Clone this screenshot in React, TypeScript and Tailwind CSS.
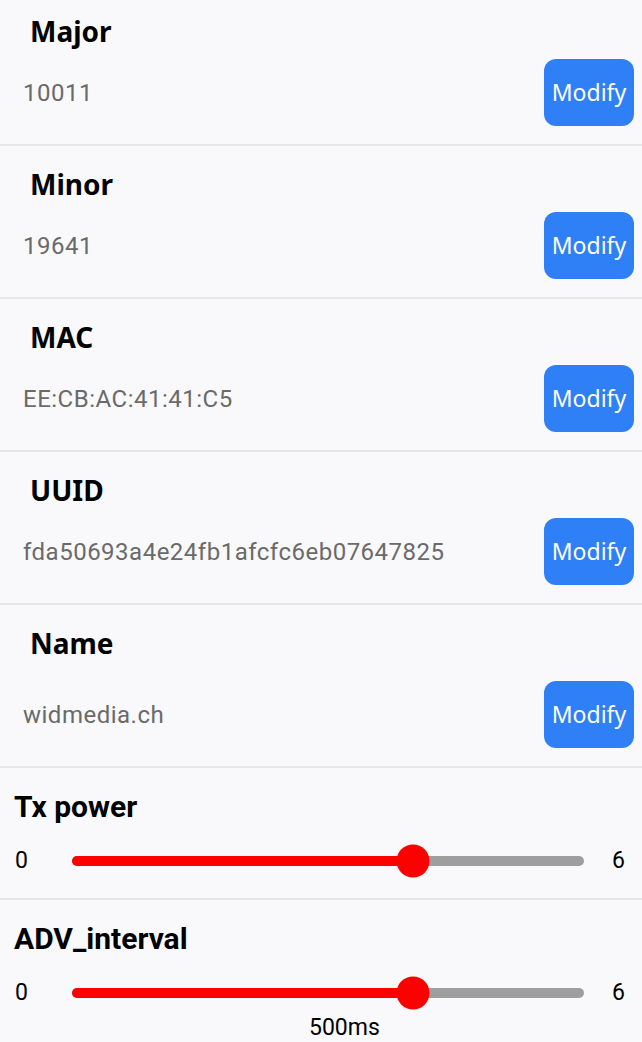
import React from 'react';

const fields = [
  { label: 'Major', value: '10011' },
  { label: 'Minor', value: '19641' },
  { label: 'MAC', value: 'EE:CB:AC:41:41:C5' },
  { label: 'UUID', value: 'fda50693a4e24fb1afcfc6eb07647825' },
  { label: 'Name', value: 'widmedia.ch', wide: true },
];

function FieldRow({ label, value, wide }: { label: string; value: string; wide?: boolean }) {
  return (
    <div className="border-b-2 border-[#e6e7e9] pt-[20px] pb-[18px]">
      <div className="pl-[30px] text-[28px] leading-[36px] font-bold text-black font-['Noto_Sans',sans-serif]">
        {label}
      </div>
      <div className={`flex items-center justify-between pl-[23px] pr-[8px] ${wide ? 'mt-[20px]' : 'mt-[10px]'}`}>
        <span className="text-[24px] text-[#6a6a6a] font-['Roboto',sans-serif] tracking-[0.5px]">{value}</span>
        <button className="w-[90px] h-[67px] rounded-[12px] bg-[#2f80f7] text-white text-[23px] font-['Noto_Sans',sans-serif]">
          Modify
        </button>
      </div>
    </div>
  );
}

function SliderRow({ label, value, max, caption, last }: { label: string; value: number; max: number; caption?: string; last?: boolean }) {
  const pct = (value / max) * 100;
  return (
    <div className={`pt-[21px] ${last ? '' : 'border-b-2 border-[#e6e7e9] pb-[17px]'}`}>
      <div className="pl-[14px] text-[30px] leading-[36px] font-bold text-black font-['Roboto',sans-serif]">
        {label}
      </div>
      <div className="flex items-center h-[40px] mt-[16px] pl-[15px] pr-[17px] font-['Roboto',sans-serif] text-[23px] text-black">
        <span className="w-[57px]">0</span>
        <div className="relative flex-1 h-[10px] rounded-full bg-[#9e9e9e]">
          <div className="h-full rounded-full bg-[#ff0000]" style={{ width: `${pct}%` }} />
          <div
            className="absolute top-1/2 w-[33px] h-[33px] -translate-x-1/2 -translate-y-1/2 rounded-full bg-[#ff0000]"
            style={{ left: `${pct}%` }}
          />
        </div>
        <span className="pl-[28px]">{max}</span>
      </div>
      {caption && (
        <div className="pl-[309px] mt-[2px] text-[23px] leading-[26px] text-black font-['Roboto',sans-serif]">{caption}</div>
      )}
    </div>
  );
}

export default function App() {
  return (
    <div className="w-[642px] h-[1042px] overflow-hidden bg-[#f9f9fb]">
      <div className="-mt-[7px]">
        {fields.map(f => (
          <FieldRow key={f.label} label={f.label} value={f.value} wide={f.wide} />
        ))}
        <SliderRow label="Tx power" value={4} max={6} />
        <SliderRow label="ADV_interval" value={4} max={6} caption="500ms" last />
      </div>
    </div>
  );
}
